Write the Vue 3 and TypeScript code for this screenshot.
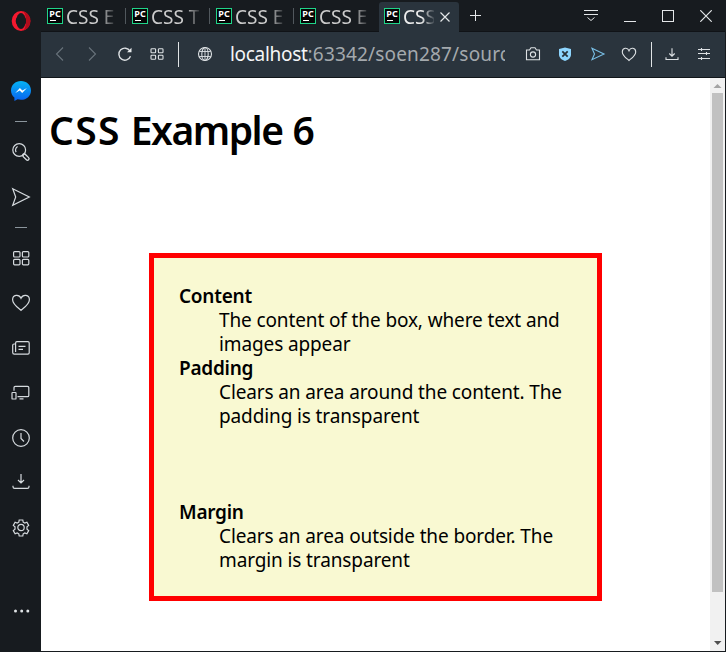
<script setup lang="ts">
interface Tab {
  title: string
  active: boolean
}

interface Term {
  name: string
  text: string
  hidden?: boolean
}

const tabs: Tab[] = [
  { title: 'CSS E', active: false },
  { title: 'CSS T', active: false },
  { title: 'CSS E', active: false },
  { title: 'CSS E', active: false },
  { title: 'CSS', active: true },
]

const terms: Term[] = [
  { name: 'Content', text: 'The content of the box, where text and images appear' },
  { name: 'Padding', text: 'Clears an area around the content. The padding is transparent' },
  { name: '', text: '', hidden: true },
  { name: 'Margin', text: 'Clears an area outside the border. The margin is transparent' },
]
</script>

<template>
  <div class="window">
    <aside class="sidebar">
      <svg class="opera" viewBox="0 0 20 20">
        <ellipse cx="10" cy="10" rx="7.3" ry="8" fill="none" stroke="#f5192f" stroke-width="4" />
        <path d="M12 .3A10 10 0 0 1 12 19.7C16 17 16 3 12 .3Z" fill="#b20c1c" />
        <ellipse cx="10" cy="10" rx="4.6" ry="8.1" fill="#171b1f" />
      </svg>
      <svg class="messenger" viewBox="0 0 20 20">
        <defs>
          <linearGradient id="msg" x1="0" y1="0" x2="0" y2="1">
            <stop offset="0" stop-color="#05b3f4" />
            <stop offset="1" stop-color="#0a62ee" />
          </linearGradient>
        </defs>
        <path d="M10 0C4.3 0 0 4.100 0 9.400c0 2.900 1.300 5.400 3.400 7.100V20l3.200-1.700c1 .3 2.200.5 3.400.5 5.700 0 10-4.100 10-9.400S15.700 0 10 0Z" fill="url(#msg)" />
        <path d="m4.300 12 4.600-4.900 2.500 2.400 4.500-2.400-4.700 4.900-2.500-2.400Z" fill="#fff" />
      </svg>
      <i class="dash first" />
      <svg class="icon search" viewBox="0 0 20 20">
        <circle cx="8.200" cy="8" r="6.400" />
        <path d="M5.200 10.200A4 4 0 0 1 6.600 4.500" />
        <path d="m13.200 13.400 3.300 3.300" stroke-width="4.400" stroke-linecap="round" />
        <path d="m13.600 13.800 2.900 2.900" class="hollow" />
      </svg>
      <svg class="icon send" viewBox="0 0 20 20"><path d="M1.700 1.800 18.300 10 1.700 18.200 4.700 10Z" /></svg>
      <i class="dash second" />
      <svg class="icon speed" viewBox="0 0 20 20">
        <rect x="2.600" y="3.600" width="6.400" height="5.400" rx="1" /><rect x="11.400" y="3.600" width="6.400" height="5.400" rx="1" />
        <rect x="2.600" y="11.400" width="6.400" height="5.400" rx="1" /><rect x="11.400" y="11.400" width="6.400" height="5.400" rx="1" />
      </svg>
      <svg class="icon heart" viewBox="0 0 20 20"><path d="M10 17.300C8 15.300 1.600 11.400 1.600 6.700 1.600 1.600 8 .9 10 5.300 12 .9 18.400 1.600 18.400 6.700c0 4.700-6.400 8.600-8.400 10.600Z" /></svg>
      <svg class="icon news" viewBox="0 0 20 20">
        <path d="M4.600 14V5q0-1.300 1.300-1.300h11q1.300 0 1.300 1.300v9.800q0 1.300-1.300 1.300H3.300Q1.700 16.100 1.700 14.500V7.300q0-1.300 1.300-1.300h1.600" />
        <path d="M7.500 8.300h7M7.500 11.300h4.500" />
      </svg>
      <svg class="icon flow" viewBox="0 0 20 20">
        <path d="M3 7.800V4.600q0-1.300 1.300-1.300h12.200q1.300 0 1.300 1.300v7.800q0 1.300-1.300 1.300H6.500M8.500 15.800h4" />
        <rect x="1" y="9.500" width="4" height="6.500" rx=".6" />
      </svg>
      <svg class="icon clock" viewBox="0 0 20 20"><circle cx="10" cy="10" r="8.300" /><path d="M10 5v5.500l3 3" /></svg>
      <svg class="icon down" viewBox="0 0 20 20"><path d="M10 2v8.500M7 8l3 3 3-3M2 13.800v.9q0 1.600 1.600 1.600h12.800q1.600 0 1.600-1.600v-.9" /></svg>
      <svg class="icon gear" viewBox="0 0 20 20">
        <path d="m8.200 2h3.600l.4 2.200 1.600.9 2.100-.8 1.800 3.100-1.700 1.400v2.400l1.700 1.400-1.800 3.100-2.100-.8-1.600.9-.4 2.200H8.200l-.4-2.200-1.600-.9-2.100.8-1.800-3.100L4 11.200V8.800L2.300 7.400l1.800-3.100 2.100.8 1.600-.9Z" />
        <circle cx="10" cy="9.500" r="3.200" />
      </svg>
      <svg class="icon more" viewBox="0 0 20 20">
        <g fill="#dfe3e6" stroke="none"><circle cx="4.500" cy="10" r="1.500" /><circle cx="10.700" cy="10" r="1.500" /><circle cx="16.800" cy="10" r="1.500" /></g>
      </svg>
    </aside>

    <main class="main">
      <header class="tabbar">
        <div v-for="(tab, i) in tabs" :key="i" class="tab" :class="{ active: tab.active }">
          <svg class="favicon" viewBox="0 0 16 16">
            <rect x=".5" y=".5" width="15" height="15" fill="#050505" stroke="#20d489" />
            <text x="2.300" y="8.600" class="pc" textLength="11.400" lengthAdjust="spacingAndGlyphs">PC</text>
            <rect x="3" y="12" width="6" height="1" fill="#fff" />
          </svg>
          <span class="title">{{ tab.title }}</span>
          <svg v-if="tab.active" class="close" viewBox="0 0 10 10"><path d="m.5.5 9 9m0-9-9 9" /></svg>
        </div>
        <svg class="plus" viewBox="0 0 11 11"><path d="M5.500 0v11M0 5.500h11" /></svg>
        <svg class="tabmenu" viewBox="0 0 14 13"><path d="M0 1.500h14M0 5.500h14M3.500 8.500 7 11.500l3.500-3" /></svg>
        <svg class="winbtn min" viewBox="0 0 12 12"><path d="M0 11.500h12" /></svg>
        <svg class="winbtn max" viewBox="0 0 12 12"><rect x=".5" y=".5" width="11" height="11" /></svg>
        <svg class="winbtn quit" viewBox="0 0 12 12"><path d="m.3.3 11.400 11.400m0-11.400L.3 11.700" /></svg>
      </header>

      <nav class="toolbar">
        <svg class="tool back" viewBox="0 0 16 16"><path d="m11 1.500-6.500 6.500 6.500 6.500" /></svg>
        <svg class="tool fwd" viewBox="0 0 16 16"><path d="m5 1.500 6.500 6.500-6.500 6.500" /></svg>
        <svg class="tool reload" viewBox="0 0 16 16"><path d="M13.500 10.300A6 6 0 1 1 13 5" stroke-width="1.400" /><path d="M14.500 1.800v4.500H10Z" fill="#e8ebed" stroke="none" /></svg>
        <svg class="tool grid" viewBox="0 0 16 16">
          <rect x="2" y="2.700" width="4.600" height="4" rx=".8" /><rect x="9.400" y="2.700" width="4.600" height="4" rx=".8" />
          <rect x="2" y="9.300" width="4.600" height="4" rx=".8" /><rect x="9.400" y="9.300" width="4.600" height="4" rx=".8" />
        </svg>
        <i class="bar left" />
        <svg class="tool globe" viewBox="0 0 16 16"><circle cx="8" cy="8" r="6.500" /><ellipse cx="8" cy="8" rx="3.200" ry="6.500" /><path d="M2.300 5.500h11.400M2.300 10.500h11.400M8 1.500v13" stroke-width=".9" /></svg>
        <div class="url"><b>localhost</b>:63342/soen287/sourc</div>
        <svg class="tool camera" viewBox="0 0 16 16"><path d="M1.500 4h3L6 1.700h4L11.500 4h3v9.800h-13Z" /><circle cx="8" cy="8.500" r="2.600" /></svg>
        <svg class="tool shield" viewBox="0 0 16 16"><path d="M8 1.500 14 3v5.500c0 3.500-3 5.400-6 6.500-3-1.100-6-3-6-6.500V3Z" fill="#8ed6ff" stroke="none" /><path d="m5.300 5.300 5.400 5.400m0-5.400-5.400 5.400" stroke="#27323b" stroke-width="1.800" /></svg>
        <svg class="tool plane" viewBox="0 0 16 16"><path d="M2 2.300 14 8 2 13.700 4.500 8Z" stroke="#79bfe6" /></svg>
        <svg class="tool like" viewBox="0 0 16 16"><path d="M8 14.500C6.300 12.800 1.300 9.800 1.300 5.900 1.300 1.700 6.500.9 8 4.800 9.500.9 14.700 1.700 14.700 5.900c0 3.900-5 6.900-6.700 8.600Z" /></svg>
        <i class="bar right" />
        <svg class="tool dl" viewBox="0 0 16 16"><path d="M8 2.300V10M5.300 7.500 8 10.200l2.700-2.700M2 11.300v2.200h12v-2.200" /></svg>
        <svg class="tool sliders" viewBox="0 0 16 16"><path d="M2 3.500h12M2 7.500h12M2 12.500h12M5.500 2v3M10.500 6v3M5.500 11v3" /></svg>
      </nav>

      <section class="view">
        <article class="page">
          <h1><span class="wide">CSS</span> <span class="tight">Example</span> 6</h1>
          <dl class="box">
            <div v-for="(term, i) in terms" :key="i" :class="{ gap: term.hidden }">
              <template v-if="!term.hidden">
                <dt>{{ term.name }}</dt>
                <dd>{{ term.text }}</dd>
              </template>
            </div>
          </dl>
        </article>
        <div class="scrollbar">
          <svg class="arrow" viewBox="0 0 15 15"><path d="M7.500 6 11.500 10h-8Z" fill="#a3a3a3" /></svg>
          <div class="thumb" />
          <svg class="arrow" viewBox="0 0 15 15"><path d="M4 5h7.500L7.700 9Z" fill="#505050" /></svg>
        </div>
      </section>
    </main>
  </div>
</template>

<style>
body {
  margin: 0;
  overflow: hidden;
}
</style>

<style scoped>
.window {
  display: flex;
  width: 726px;
  height: 652px;
  background: #171b1f;
  font-family: "Noto Sans", sans-serif;
  box-sizing: border-box;
}
svg {
  display: block;
  flex: none;
}
.sidebar {
  width: 41px;
  flex: none;
  display: flex;
  flex-direction: column;
  align-items: flex-start;
  padding-left: 11px;
  box-sizing: border-box;
}
.opera {
  width: 20px;
  height: 20px;
  margin-top: 11px;
}
.messenger {
  width: 20px;
  height: 20px;
  margin-top: 50px;
}
.icon {
  width: 20px;
  height: 20px;
  margin-left: -0.5px;
  fill: none;
  stroke: #d5dade;
  stroke-width: 1.200;
}
.hollow {
  stroke: #171b1f;
  stroke-width: 1.800;
  stroke-linecap: round;
}
.dash {
  width: 12px;
  height: 1px;
  margin-left: 4px;
  background: #8b959c;
}
.dash.first { margin-top: 20px; }
.search { margin-top: 20px; }
.send { margin-top: 25px; }
.dash.second { margin-top: 20px; }
.speed { margin-top: 20px; }
.heart { margin-top: 25px; }
.news { margin-top: 25px; }
.flow { margin-top: 25px; }
.clock { margin-top: 25px; }
.down { margin-top: 24px; }
.gear { margin-top: 26px; }
.more { margin-top: 63px; }

.main {
  width: 684px;
  display: flex;
  flex-direction: column;
}
.tabbar {
  height: 31px;
  display: flex;
  align-items: flex-start;
  border-bottom: 1px solid #101317;
}
.tab {
  width: 84px;
  height: 31px;
  box-sizing: border-box;
  padding: 8px 0 0 6px;
  display: flex;
  gap: 3px;
  flex: none;
  background: linear-gradient(#51585d, #51585d) right 0 top 8px / 1px 16px no-repeat;
}
.tab:nth-child(1) { width: 85px; }
.tab:nth-child(4) { width: 85px; background: none; }
.tab.active {
  width: 80px;
  height: 30px;
  margin-top: 2px;
  padding: 6px 0 0 5px;
  background: #2a343d;
  border-radius: 3px 3px 0 0;
}
.favicon {
  width: 16px;
  height: 16px;
}
.pc {
  font: bold 8px "Noto Sans", sans-serif;
  fill: #fff;
}
.title {
  width: 52px;
  height: 26px;
  margin-top: -4px;
  overflow: hidden;
  white-space: nowrap;
  font-size: 19px;
  line-height: 26px;
  color: #ccc;
  -webkit-mask-image: linear-gradient(90deg, #000 66%, transparent 98%);
  mask-image: linear-gradient(90deg, #000 66%, transparent 98%);
}
.active .title {
  width: 31px;
  color: #eee;
  -webkit-mask-image: linear-gradient(90deg, #000 60%, transparent 105%);
  mask-image: linear-gradient(90deg, #000 60%, transparent 105%);
}
.close {
  width: 10px;
  height: 10px;
  margin: 4px 0 0 3px;
}
.close, .plus, .tabmenu, .winbtn {
  fill: none;
  stroke: #e4e7e9;
  stroke-width: 1.200;
}
.tabmenu, .min, .max, .plus { stroke-width: 1; }
.plus {
  width: 11px;
  height: 11px;
  margin: 10px 1px 0 11px;
}
.tabmenu {
  width: 14px;
  height: 13px;
  margin: 9px 0 0 102px;
}
.winbtn {
  width: 12px;
  height: 12px;
  margin-top: 10px;
}
.min { margin-left: 26px; }
.max { margin-left: 26px; }
.quit { margin-left: 26px; }

.toolbar {
  height: 45px;
  display: flex;
  align-items: center;
  background: #2a343d;
  border-bottom: 1px solid #11161a;
}
.tool {
  width: 16px;
  height: 16px;
  margin-top: -1px;
  fill: none;
  stroke: #dde1e4;
  stroke-width: 1.100;
}
.back { margin-left: 11px; }
.fwd { margin-left: 16px; }
.back, .fwd { stroke: #68737b; }
.reload { margin-left: 17px; }
.grid { margin-left: 16px; }
.bar {
  width: 1px;
  height: 25px;
  flex: none;
  background: #e0e4e6;
}
.bar.left { margin-left: 13px; }
.globe { margin-left: 18px; }
.url {
  width: 275px;
  margin: -1px 0 0 17px;
  overflow: hidden;
  white-space: nowrap;
  font-size: 19px;
  line-height: 26px;
  letter-spacing: 0.17px;
  color: #a4a9ad;
}
.url b {
  font-weight: 400;
  letter-spacing: -0.3px;
  color: #f5f6f7;
}
.camera { margin-left: 20px; }
.shield { margin-left: 16px; }
.plane { margin-left: 17px; }
.like { margin-left: 15px; }
.bar.right { margin-left: 14px; }
.dl { margin-left: 12px; }
.sliders { margin-left: 16px; }

.view {
  height: 573px;
  display: flex;
  background: #fff;
}
.page {
  width: 669px;
  color: #000;
}
h1 {
  margin: 25px 0 0 8px;
  font-size: 39px;
  line-height: 54px;
  font-weight: 600;
}
.wide { letter-spacing: 1.300px; }
.tight { letter-spacing: -1.500px; }
.box {
  width: 393px;
  margin: 96px 0 0 108px;
  padding: 26px 25px 24px;
  border: 5px solid red;
  background: #f9f9d2;
  font-size: 19px;
  line-height: 24px;
  letter-spacing: -0.12px;
}
.gap { height: 72px; }
dt {
  font-weight: 600;
  letter-spacing: -0.25px;
}
dd {
  margin: 0 0 0 40px;
}
.scrollbar {
  width: 15px;
  display: flex;
  flex-direction: column;
  align-items: center;
  justify-content: space-between;
  background: #f1f1f1;
}
.arrow {
  width: 15px;
  height: 15px;
}
.thumb {
  width: 11px;
  height: 499px;
  margin-bottom: auto;
  background: #c1c1c1;
}
</style>
